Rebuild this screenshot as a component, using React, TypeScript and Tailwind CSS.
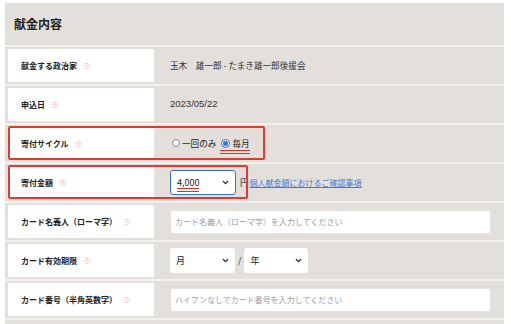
import { ChevronDown } from 'lucide-react';

const font = { fontFamily: '"Noto Sans CJK JP", "Noto Sans", sans-serif' };

function Label({ text }: { text: string }) {
  return (
    <div className="ml-[3px] flex h-[33px] w-[146px] shrink-0 items-center bg-white pl-[13px] text-[8px] font-bold text-[#222]">
      {text}
      <span className="ml-[6px] font-normal text-[#f3a3ad]">※</span>
    </div>
  );
}

function Row({ label, children }: { label: string; children?: React.ReactNode }) {
  return (
    <div className="relative flex h-[39px] items-center border-t-2 border-[#f3f1ee]">
      <Label text={label} />
      <div className="flex flex-1 items-center pl-[16px] pr-[13px] text-[8.6px] text-[#333]">{children}</div>
    </div>
  );
}

function Select({ value, width, focus }: { value: string; width: string; focus?: boolean }) {
  return (
    <div
      className={`flex h-[25px] items-center justify-between rounded-[3px] bg-white pl-[6px] pr-[5px] text-[9px] text-[#222] ${width} ${
        focus ? 'border-[1.5px] border-[#3b6fd6]' : ''
      }`}
    >
      <span className="relative">
        {value}
        {focus && <span className="absolute left-0 right-0 top-[12px] h-[4px] border-y border-[#e53323]" />}
      </span>
      <ChevronDown size={9} strokeWidth={3.5} className="text-[#222]" />
    </div>
  );
}

function TextInput({ placeholder }: { placeholder: string }) {
  return (
    <div className="flex h-[24px] w-full items-center rounded-[3px] border border-[#e6e4e1] bg-white pl-[4px] text-[8px] text-[#9d9d9d]">
      {placeholder}
    </div>
  );
}

export default function App() {
  return (
    <div className="h-[324px] w-[511px] overflow-hidden bg-white pl-[5px] pt-[3px]" style={font}>
      <div className="h-[330px] w-[499px] bg-[#e3e0dc]">
        <div className="flex h-[42px] items-center pl-[9px] text-[12px] font-bold text-[#222]">献金内容</div>

        <Row label="献金する政治家">玉木　雄一郎 - たまき雄一郎後援会</Row>
        <Row label="申込日">
          <span className="text-[9.5px]" style={{ fontFamily: '"Liberation Sans", sans-serif' }}>
            2023/05/22
          </span>
        </Row>

        <Row label="寄付サイクル">
          <div className="flex items-center pl-[2px] text-[8.6px] text-[#222]">
            <span className="mr-[2px] h-[8px] w-[8px] rounded-full border border-[#888] bg-white" />
            一回のみ
            <span className="relative ml-[5px] flex items-center">
              <span className="mr-[2px] flex h-[9px] w-[9px] items-center justify-center rounded-full border border-[#2f6fe0] bg-white">
                <span className="h-[5px] w-[5px] rounded-full bg-[#2f6fe0]" />
              </span>
              毎月
              <span className="absolute -left-[1px] right-0 top-[13px] h-[4px] border-y border-[#e53323]" />
            </span>
          </div>
          <div className="pointer-events-none absolute left-[3px] top-[1px] h-[34px] w-[257px] rounded-[2px] border-2 border-[#e8382b]" />
        </Row>

        <Row label="寄付金額">
          <Select value="4,000" width="w-[66px]" focus />
          <span className="ml-[4px] text-[#222]">円</span>
          <span className="ml-[1px] text-[8px] text-[#3d7bd8] underline">個人献金額におけるご確認事項</span>
          <div className="pointer-events-none absolute left-[3px] top-[1px] h-[34px] w-[240px] rounded-[2px] border-2 border-[#e8382b]" />
        </Row>

        <Row label="カード名義人（ローマ字）">
          <TextInput placeholder="カード名義人（ローマ字）を入力してください" />
        </Row>

        <Row label="カード有効期限">
          <Select value="月" width="w-[65px]" />
          <span className="mx-[3px] text-[#222]">/</span>
          <Select value="年" width="w-[64px]" />
        </Row>

        <Row label="カード番号（半角英数字）">
          <TextInput placeholder="ハイフンなしでカード番号を入力してください" />
        </Row>

        <div className="h-[10px] border-t-2 border-[#f3f1ee]" />
      </div>
    </div>
  );
}
